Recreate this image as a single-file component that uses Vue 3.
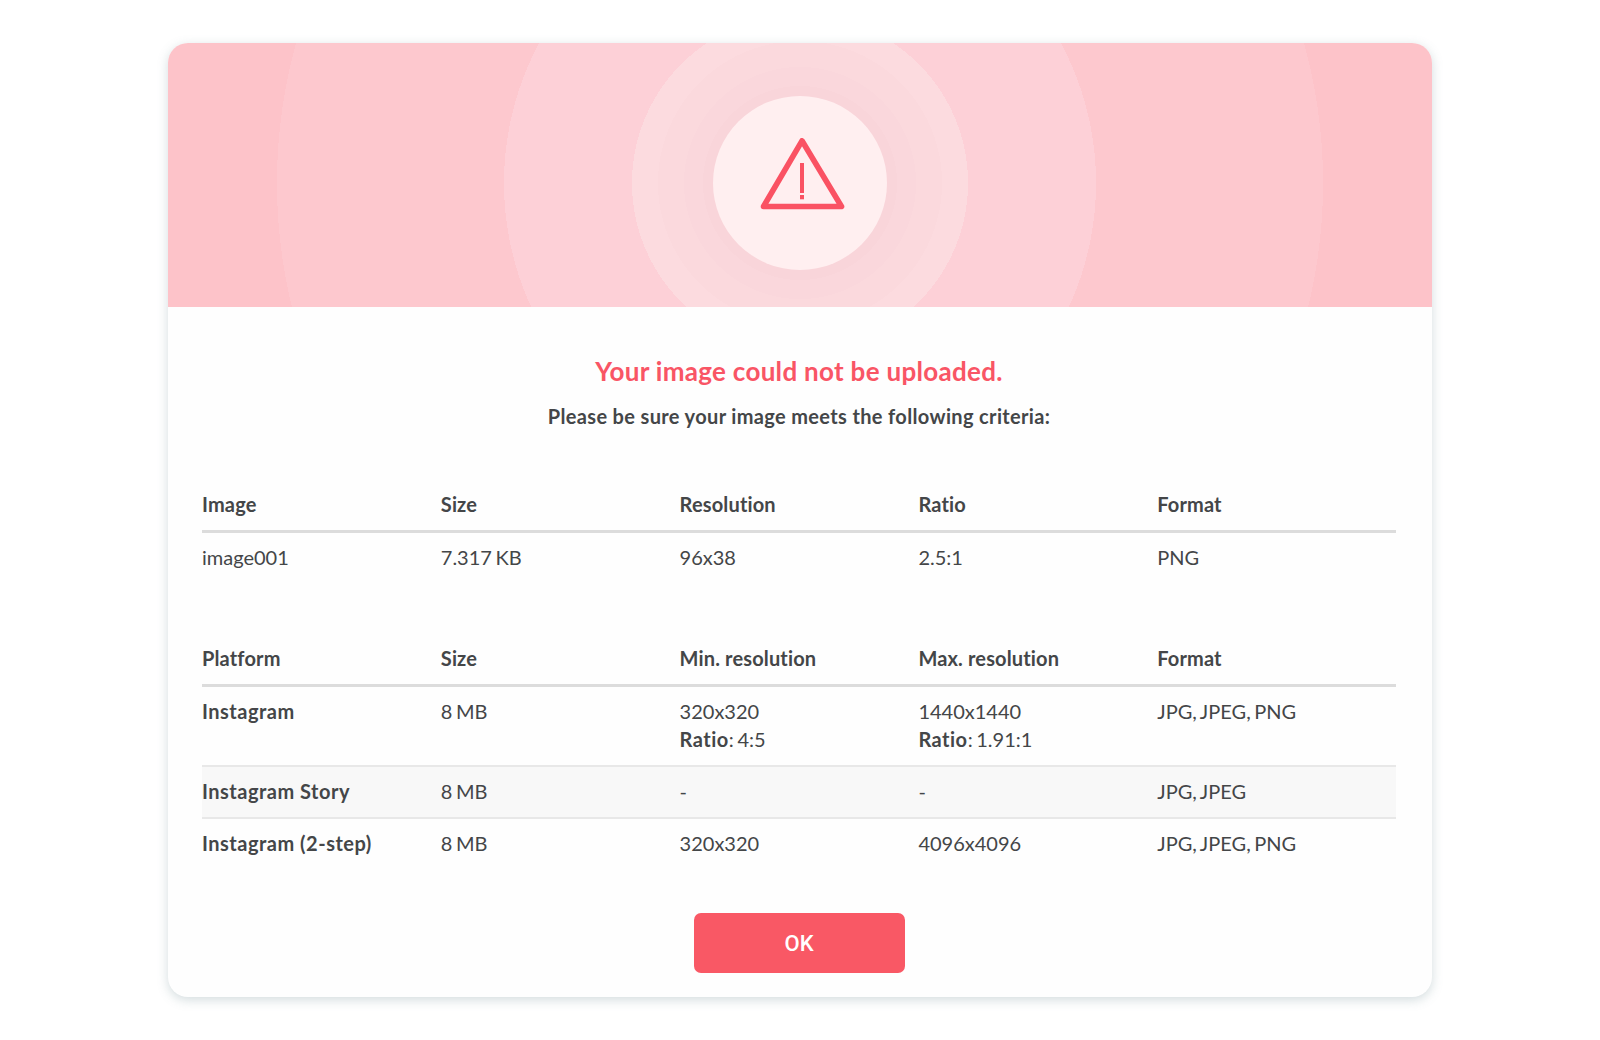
<script setup>
const imageHead = ["Image", "Size", "Resolution", "Ratio", "Format"];
const imageRow = ["image001", "7.317 KB", "96x38", "2.5:1", "PNG"];

const platformHead = ["Platform", "Size", "Min. resolution", "Max. resolution", "Format"];
const platforms = [
  { name: "Instagram", size: "8 MB", min: "320x320", minRatio: "4:5", max: "1440x1440", maxRatio: "1.91:1", format: "JPG, JPEG, PNG" },
  { name: "Instagram Story", size: "8 MB", min: "-", max: "-", format: "JPG, JPEG", shaded: true },
  { name: "Instagram (2-step)", size: "8 MB", min: "320x320", max: "4096x4096", format: "JPG, JPEG, PNG" },
];
</script>

<template>
  <div class="page">
    <div class="card">
      <div class="hero">
        <div class="circle">
          <svg class="warn" width="90" height="78" viewBox="0 0 90 78" fill="none">
            <path d="M45 4.800 L84.500 70.500 L6.500 70.500 Z" stroke="#fa5263" stroke-width="5.600" stroke-linejoin="round" />
            <path d="M45 27 V57" stroke="#fa5263" stroke-width="4" />
            <path d="M45 59 V63.300" stroke="#fa5263" stroke-width="4" />
          </svg>
        </div>
      </div>

      <div class="body">
        <h2 class="title">Your image could not be uploaded.</h2>
        <p class="sub">Please be sure your image meets the following criteria:</p>

        <table class="info first">
          <thead>
            <tr><th v-for="h in imageHead" :key="h">{{ h }}</th></tr>
          </thead>
          <tbody>
            <tr><td v-for="c in imageRow" :key="c">{{ c }}</td></tr>
          </tbody>
        </table>

        <table class="info second">
          <thead>
            <tr><th v-for="h in platformHead" :key="h">{{ h }}</th></tr>
          </thead>
          <tbody>
            <tr v-for="p in platforms" :key="p.name" :class="{ shaded: p.shaded }">
              <td><b>{{ p.name }}</b></td>
              <td>{{ p.size }}</td>
              <td>
                {{ p.min }}
                <div v-if="p.minRatio"><b>Ratio</b>: {{ p.minRatio }}</div>
              </td>
              <td>
                {{ p.max }}
                <div v-if="p.maxRatio"><b>Ratio</b>: {{ p.maxRatio }}</div>
              </td>
              <td>{{ p.format }}</td>
            </tr>
          </tbody>
        </table>

        <button class="ok">OK</button>
      </div>
    </div>
  </div>
</template>

<style scoped>
.page {
  padding: 43px 0;
  font-family: "Lato", "Noto Sans", sans-serif;
  color: #444648;
}

.card {
  width: 1264px;
  height: 954px;
  margin: 0 auto;
  background: #fefefe;
  border-radius: 20px;
  overflow: hidden;
  box-shadow: 0 3px 11px rgba(110, 140, 145, 0.3);
}

.hero {
  height: 264px;
  box-sizing: border-box;
  padding-top: 53px;
  display: flex;
  justify-content: center;
  background: radial-gradient(
    circle at 632px 140px,
    #f9d5da 0 97px,
    #fad7dc 97px 116px,
    #fbd9dd 116px 142px,
    #fcdbdf 142px 168px,
    #fdd0d7 168px 296px,
    #fdc8ce 296px 523px,
    #fdc3c9 523px
  );
}

.circle {
  width: 174px;
  height: 174px;
  border-radius: 50%;
  background: #ffeff0;
  display: flex;
  align-items: center;
  justify-content: center;
}

.warn {
  margin-top: -16px;
  margin-left: 4px;
  filter: blur(0.4px);
}

.body {
  padding: 46px 36px 0 34px;
  display: flex;
  flex-direction: column;
  align-items: center;
}

.title {
  margin: 0;
  font-size: 26px;
  line-height: 36px;
  font-weight: 700;
  letter-spacing: 0.3px;
  color: #f95565;
}

.sub {
  margin: 14px 0 0;
  font-size: 20px;
  line-height: 26px;
  font-weight: 700;
  letter-spacing: 0.35px;
  color: #444648;
}

.info {
  width: 1194px;
  table-layout: fixed;
  border-collapse: collapse;
  font-size: 20px;
}

.first {
  margin-top: 49px;
}

.second {
  margin-top: 49px;
}

.info th {
  text-align: left;
  font-weight: 700;
  letter-spacing: 0.15px;
  height: 52px;
  padding: 0;
  border-bottom: 3px solid #dcdcdc;
}

.info td {
  padding: 10px 0 12px;
  line-height: 28px;
  vertical-align: top;
  word-spacing: -1.5px;
  border-bottom: 2px solid #e8e8e8;
}

.info td b {
  letter-spacing: 0.5px;
  word-spacing: 0;
}

.info tr:last-child td {
  border-bottom: none;
}

.shaded td {
  background: #f8f8f8;
}

.ok {
  margin-top: 44px;
  width: 211px;
  height: 60px;
  border: none;
  border-radius: 7px;
  background: #f95865;
  color: #fff;
  font-family: "Roboto", sans-serif;
  font-size: 22px;
  font-weight: 500;
}
</style>
